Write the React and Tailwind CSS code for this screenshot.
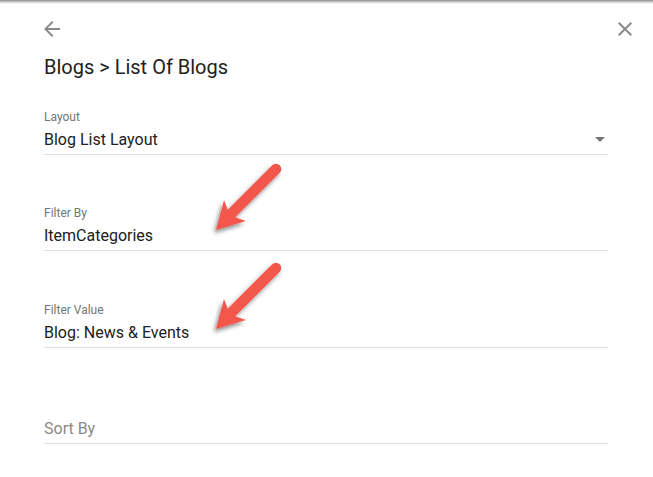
import React from 'react';

// Pole formuláře ve stylu Material: popisek, hodnota, spodní linka
const Field = ({ label, value, placeholder, dropdown, gap = 'mb-[50px]' }) => (
  <div className={`w-[564px] ${gap}`}>
    <div className="h-4 text-[12px] leading-4 text-[#757575]">{label}</div>
    <div className="mt-[3px] pb-[2px] border-b border-[#e0e0e0] flex items-center">
      <div className={`flex-1 h-6 text-[16px] leading-6 ${value ? 'text-[#212121]' : 'text-[#8a8a8a]'}`}>
        {value || placeholder}
      </div>
      {dropdown && (
        <svg width="24" height="24" viewBox="0 0 24 24" className="mr-[-4px] mt-[-2px]">
          <path d="M7 10l5 5 5-5z" fill="#757575" />
        </svg>
      )}
    </div>
  </div>
);

// Červená šipka s vrženým stínem (anotace přes obsah)
const Arrow = ({ dy }) => (
  <g transform={`translate(0 ${dy})`} filter="url(#arrowShadow)">
    <line x1="276" y1="169" x2="231" y2="214" stroke="#f3574b" strokeWidth="10.5" strokeLinecap="round" />
    <polygon points="216,230 224,200 230,215.6 246,221" fill="#f3574b" />
  </g>
);

const App = () => {
  return (
    <div className="relative min-h-[477px] bg-white" style={{ fontFamily: 'Roboto, "Liberation Sans", sans-serif' }}>
      <div className="h-[4px] bg-linear-to-b from-[#8c8c8c] via-[#d2d2d2] to-white" />

      <div className="flex items-center justify-between pl-[40px] pr-[16px] mt-[13px]">
        <svg width="24" height="24" viewBox="0 0 24 24">
          <path d="M20 11H7.83l5.59-5.59L12 4l-8 8 8 8 1.41-1.41L7.83 13H20v-2z" fill="#8a8a8a" />
        </svg>
        <svg width="24" height="24" viewBox="0 0 24 24">
          <path d="M19 6.41L17.59 5 12 10.59 6.41 5 5 6.41 10.59 12 5 17.59 6.41 19 12 13.41 17.59 19 19 17.59 13.41 12z" fill="#8a8a8a" />
        </svg>
      </div>

      <div className="pl-[44px]">
        <h1 className="mt-[12px] text-[20px] leading-7 text-[#212121]">Blogs &gt; List Of Blogs</h1>

        <div className="mt-[28px]">
          <Field label="Layout" value="Blog List Layout" dropdown />
          <Field label="Filter By" value="ItemCategories" gap="mb-[51px]" />
          <Field label="Filter Value" value="Blog: News & Events" />
          <Field label="" placeholder="Sort By" />
        </div>
      </div>

      <svg className="absolute inset-0 pointer-events-none" width="653" height="477">
        <defs>
          <filter id="arrowShadow" x="-30%" y="-30%" width="160%" height="160%">
            <feDropShadow dx="-2" dy="3" stdDeviation="2" floodColor="#000" floodOpacity="0.45" />
          </filter>
        </defs>
        <Arrow dy={0} />
        <Arrow dy={99} />
      </svg>
    </div>
  );
};

export default App;
